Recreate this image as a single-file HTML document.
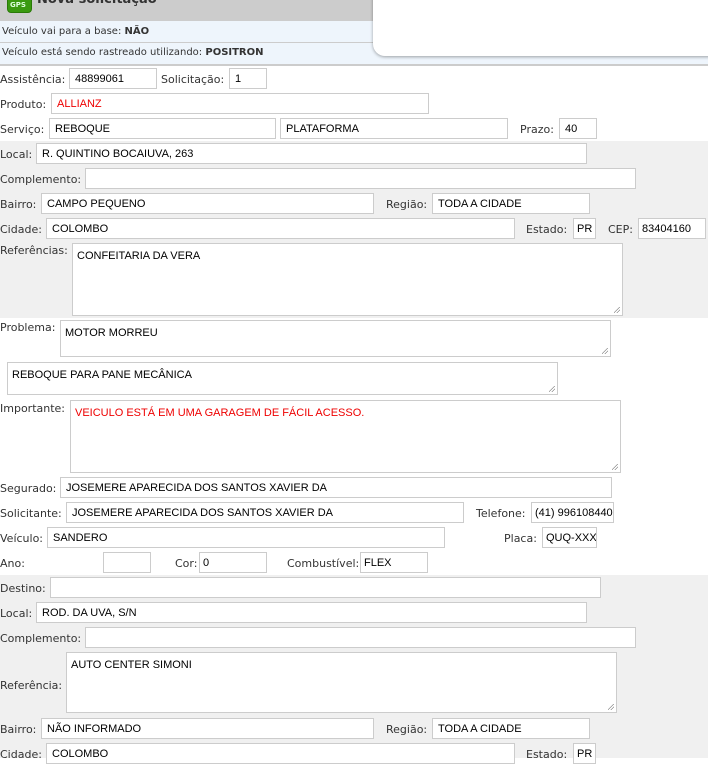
<!DOCTYPE html>
<html><head><meta charset="utf-8"><style>
body{margin:0;width:708px;height:758px;overflow:hidden;background:#fff;position:relative;font-family:"DejaVu Sans",Verdana,sans-serif;font-size:11px;color:#333}
.a{position:absolute}
.g{position:absolute;left:0;width:708px;background:#f0f0f0}
.l{position:absolute;white-space:nowrap;line-height:14px;margin-top:1px}
.i{position:absolute;box-sizing:border-box;border:1px solid #ccc;background:#fff;height:21px;font-family:"Liberation Sans",sans-serif;font-size:11px;color:#000;padding:4px 0 0 5px;white-space:nowrap;overflow:hidden}
.t{position:absolute;box-sizing:border-box;border:1px solid #ccc;background:#fff;font-family:"Liberation Sans",sans-serif;font-size:11px;color:#000;padding:6px 0 0 4px}
.t:after{content:"";position:absolute;right:2px;bottom:2px;width:6px;height:6px;background:linear-gradient(135deg,transparent 45%,#888 46%,#888 52%,transparent 53%,transparent 70%,#888 71%,#888 77%,transparent 78%)}
</style></head><body>
<div class="a" style="left:0;top:0;width:373px;height:21px;background:#ccc"></div>
<div class="a" style="left:7px;top:-4px;width:23px;height:15px;background:#3a9a10;border-radius:4px;border:1px solid #2a7a08"></div>
<div class="a" style="left:10px;top:1px;font:bold 7px 'DejaVu Sans',sans-serif;color:#dfd">GPS</div>
<div class="a" style="left:37px;top:-8px;font:bold 13px 'DejaVu Sans',sans-serif;color:#333">Nova solicitação</div>
<div class="a" style="left:0;top:21px;width:708px;height:43px;background:#eef5fc"></div>
<div class="a" style="left:0;top:42px;width:373px;height:1px;background:#ccc"></div>
<div class="a" style="left:0;top:64px;width:708px;height:2px;background:#ccc"></div>
<div class="l" style="left:2px;top:24px;font-size:10px">Veículo vai para a base: <b>NÃO</b></div>
<div class="l" style="left:2px;top:45px;font-size:10px">Veículo está sendo rastreado utilizando: <b>POSITRON</b></div>
<div class="a" style="left:373px;top:-10px;width:340px;height:66px;background:#fff;border-radius:0 0 0 12px;box-shadow:0 1px 3px rgba(0,0,0,.35)"></div>

<div class="l" style="left:0;top:72px">Assistência:</div><div class="i" style="left:69px;top:68px;width:88px">48899061</div>
<div class="l" style="left:161px;top:72px">Solicitação:</div><div class="i" style="left:229px;top:68px;width:38px">1</div>
<div class="l" style="left:0;top:97px">Produto:</div><div class="i" style="left:51px;top:93px;width:378px;color:#e00">ALLIANZ</div>
<div class="l" style="left:0;top:122px">Serviço:</div><div class="i" style="left:49px;top:118px;width:227px">REBOQUE</div>
<div class="i" style="left:280px;top:118px;width:228px">PLATAFORMA</div>
<div class="l" style="left:520px;top:122px">Prazo:</div><div class="i" style="left:559px;top:118px;width:38px">40</div>

<div class="g" style="top:141px;height:177px"></div>
<div class="l" style="left:0;top:147px">Local:</div><div class="i" style="left:36px;top:143px;width:551px">R. QUINTINO BOCAIUVA, 263</div>
<div class="l" style="left:0;top:172px">Complemento:</div><div class="i" style="left:85px;top:168px;width:551px"></div>
<div class="l" style="left:0;top:197px">Bairro:</div><div class="i" style="left:41px;top:193px;width:333px">CAMPO PEQUENO</div>
<div class="l" style="left:386px;top:197px">Região:</div><div class="i" style="left:432px;top:193px;width:158px">TODA A CIDADE</div>
<div class="l" style="left:0;top:222px">Cidade:</div><div class="i" style="left:46px;top:218px;width:469px">COLOMBO</div>
<div class="l" style="left:526px;top:222px">Estado:</div><div class="i" style="left:573px;top:218px;width:23px;padding-left:3px">PR</div>
<div class="l" style="left:608px;top:222px">CEP:</div><div class="i" style="left:638px;top:218px;width:68px;padding-left:3px">83404160</div>
<div class="l" style="left:0;top:243px">Referências:</div><div class="t" style="left:72px;top:243px;width:551px;height:73px">CONFEITARIA DA VERA</div>

<div class="l" style="left:0;top:320px">Problema:</div><div class="t" style="left:60px;top:320px;width:551px;height:37px">MOTOR MORREU</div>
<div class="t" style="left:7px;top:362px;width:551px;height:33px">REBOQUE PARA PANE MECÂNICA</div>
<div class="l" style="left:0;top:401px">Importante:</div><div class="t" style="left:70px;top:400px;width:551px;height:73px;color:#e00">VEICULO ESTÁ EM UMA GARAGEM DE FÁCIL ACESSO.</div>
<div class="l" style="left:0;top:481px">Segurado:</div><div class="i" style="left:60px;top:477px;width:552px">JOSEMERE APARECIDA DOS SANTOS XAVIER DA</div>
<div class="l" style="left:0;top:506px">Solicitante:</div><div class="i" style="left:66px;top:502px;width:398px">JOSEMERE APARECIDA DOS SANTOS XAVIER DA</div>
<div class="l" style="left:476px;top:506px">Telefone:</div><div class="i" style="left:531px;top:502px;width:83px;padding-left:3px">(41) 996108440</div>
<div class="l" style="left:0;top:531px">Veículo:</div><div class="i" style="left:47px;top:527px;width:398px">SANDERO</div>
<div class="l" style="left:504px;top:531px">Placa:</div><div class="i" style="left:542px;top:527px;width:55px;padding-left:3px">QUQ-XXXX</div>
<div class="l" style="left:0;top:556px">Ano:</div><div class="i" style="left:103px;top:552px;width:48px"></div>
<div class="l" style="left:175px;top:556px">Cor:</div><div class="i" style="left:199px;top:552px;width:68px;padding-left:3px">0</div>
<div class="l" style="left:287px;top:556px">Combustível:</div><div class="i" style="left:360px;top:552px;width:68px;padding-left:3px">FLEX</div>

<div class="g" style="top:575px;height:183px"></div>
<div class="l" style="left:0;top:581px">Destino:</div><div class="i" style="left:50px;top:577px;width:551px"></div>
<div class="l" style="left:0;top:606px">Local:</div><div class="i" style="left:36px;top:602px;width:551px">ROD. DA UVA, S/N</div>
<div class="l" style="left:0;top:631px">Complemento:</div><div class="i" style="left:85px;top:627px;width:551px"></div>
<div class="l" style="left:0;top:678px">Referência:</div><div class="t" style="left:66px;top:652px;width:551px;height:61px">AUTO CENTER SIMONI</div>
<div class="l" style="left:0;top:722px">Bairro:</div><div class="i" style="left:41px;top:718px;width:333px">NÃO INFORMADO</div>
<div class="l" style="left:386px;top:722px">Região:</div><div class="i" style="left:432px;top:718px;width:158px">TODA A CIDADE</div>
<div class="l" style="left:0;top:747px">Cidade:</div><div class="i" style="left:46px;top:743px;width:469px">COLOMBO</div>
<div class="l" style="left:526px;top:747px">Estado:</div><div class="i" style="left:573px;top:743px;width:23px;padding-left:3px">PR</div>
</body></html>
